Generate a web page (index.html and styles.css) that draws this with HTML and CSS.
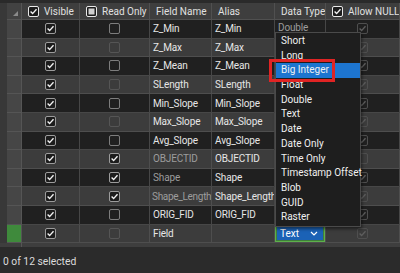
FILE: index.html
```html
<!DOCTYPE html>
<html>
<head>
<meta charset="utf-8">
<link rel="stylesheet" href="styles.css">
</head>
<body>
<svg class="defs" width="0" height="0">
  <symbol id="on" viewBox="0 0 11 11"><rect x="0.5" y="0.5" width="10" height="10" rx="1.5" fill="#1c1c1c" stroke="#9c9c9c"/><path d="M2.6 5.6l2 2 3.9-4.4" stroke="#f2f2f2" stroke-width="1.4" fill="none"/></symbol>
  <symbol id="off" viewBox="0 0 11 11"><rect x="0.5" y="0.5" width="10" height="10" rx="1.5" fill="none" stroke="currentColor"/></symbol>
  <symbol id="dis" viewBox="0 0 11 11"><rect x="0.5" y="0.5" width="10" height="10" rx="1.5" fill="none" stroke="#4f4f4f"/><path d="M2.6 5.6l2 2 3.9-4.4" stroke="#5e5e5e" stroke-width="1.4" fill="none"/></symbol>
  <symbol id="disoff" viewBox="0 0 11 11"><rect x="0.5" y="0.5" width="10" height="10" rx="1.5" fill="none" stroke="#4f4f4f"/></symbol>
  <symbol id="hon" viewBox="0 0 11 11"><rect x="0.5" y="0.5" width="10" height="10" rx="1.5" fill="#1c1c1c" stroke="#e8e8e8"/><path d="M2.6 5.6l2 2 3.9-4.4" stroke="#f2f2f2" stroke-width="1.4" fill="none"/></symbol>
  <symbol id="hind" viewBox="0 0 11 11"><rect x="0.5" y="0.5" width="10" height="10" rx="1.5" fill="#1c1c1c" stroke="#e8e8e8"/><rect x="2.5" y="2.5" width="6" height="6" fill="#cfcfcf"/></symbol>
</svg>
<div class="app">
  <div class="topbar"></div>
  <div class="gridwrap">
    <div class="row hdr">
      <div class="cell rh corner"><span class="tri"></span></div>
      <div class="cell hc"><svg class="cb"><use href="#hon"/></svg><span>Visible</span></div>
      <div class="cell hc"><svg class="cb"><use href="#hind"/></svg><span>Read Only</span></div>
      <div class="cell hc"><span>Field Name</span></div>
      <div class="cell hc"><span>Alias</span></div>
      <div class="cell hc"><span>Data Type</span></div>
      <div class="cell hc"><svg class="cb"><use href="#hon"/></svg><span>Allow NULL</span></div>
    </div>

    <div class="row dk">
      <div class="cell rh"></div>
      <div class="cell c"><svg class="cb"><use href="#on"/></svg></div>
      <div class="cell c"><svg class="cb"><use href="#off"/></svg></div>
      <div class="cell t">Z_Min</div>
      <div class="cell t">Z_Min</div>
      <div class="cell t dim dt">Double</div>
      <div class="cell c"><svg class="cb"><use href="#dis"/></svg></div>
    </div>
    <div class="row lt">
      <div class="cell rh"></div>
      <div class="cell c"><svg class="cb"><use href="#on"/></svg></div>
      <div class="cell c"><svg class="cb"><use href="#off"/></svg></div>
      <div class="cell t">Z_Max</div>
      <div class="cell t">Z_Max</div>
      <div class="cell t"></div>
      <div class="cell c"><svg class="cb"><use href="#dis"/></svg></div>
    </div>
    <div class="row dk">
      <div class="cell rh"></div>
      <div class="cell c"><svg class="cb"><use href="#on"/></svg></div>
      <div class="cell c"><svg class="cb"><use href="#off"/></svg></div>
      <div class="cell t">Z_Mean</div>
      <div class="cell t">Z_Mean</div>
      <div class="cell t"></div>
      <div class="cell c"><svg class="cb"><use href="#dis"/></svg></div>
    </div>
    <div class="row lt">
      <div class="cell rh"></div>
      <div class="cell c"><svg class="cb"><use href="#on"/></svg></div>
      <div class="cell c"><svg class="cb"><use href="#off"/></svg></div>
      <div class="cell t">SLength</div>
      <div class="cell t">SLength</div>
      <div class="cell t"></div>
      <div class="cell c"><svg class="cb"><use href="#dis"/></svg></div>
    </div>
    <div class="row dk">
      <div class="cell rh"></div>
      <div class="cell c"><svg class="cb"><use href="#on"/></svg></div>
      <div class="cell c"><svg class="cb"><use href="#off"/></svg></div>
      <div class="cell t">Min_Slope</div>
      <div class="cell t">Min_Slope</div>
      <div class="cell t"></div>
      <div class="cell c"><svg class="cb"><use href="#dis"/></svg></div>
    </div>
    <div class="row lt">
      <div class="cell rh"></div>
      <div class="cell c"><svg class="cb"><use href="#on"/></svg></div>
      <div class="cell c"><svg class="cb"><use href="#off"/></svg></div>
      <div class="cell t">Max_Slope</div>
      <div class="cell t">Max_Slope</div>
      <div class="cell t"></div>
      <div class="cell c"><svg class="cb"><use href="#dis"/></svg></div>
    </div>
    <div class="row dk">
      <div class="cell rh"></div>
      <div class="cell c"><svg class="cb"><use href="#on"/></svg></div>
      <div class="cell c"><svg class="cb"><use href="#off"/></svg></div>
      <div class="cell t">Avg_Slope</div>
      <div class="cell t">Avg_Slope</div>
      <div class="cell t"></div>
      <div class="cell c"><svg class="cb"><use href="#dis"/></svg></div>
    </div>
    <div class="row lt">
      <div class="cell rh"></div>
      <div class="cell c"><svg class="cb"><use href="#on"/></svg></div>
      <div class="cell c"><svg class="cb"><use href="#on"/></svg></div>
      <div class="cell t dim">OBJECTID</div>
      <div class="cell t">OBJECTID</div>
      <div class="cell t"></div>
      <div class="cell c"><svg class="cb"><use href="#disoff"/></svg></div>
    </div>
    <div class="row dk">
      <div class="cell rh"></div>
      <div class="cell c"><svg class="cb"><use href="#on"/></svg></div>
      <div class="cell c"><svg class="cb"><use href="#on"/></svg></div>
      <div class="cell t dim">Shape</div>
      <div class="cell t">Shape</div>
      <div class="cell t"></div>
      <div class="cell c"><svg class="cb"><use href="#dis"/></svg></div>
    </div>
    <div class="row lt">
      <div class="cell rh"></div>
      <div class="cell c"><svg class="cb"><use href="#on"/></svg></div>
      <div class="cell c"><svg class="cb"><use href="#on"/></svg></div>
      <div class="cell t dim tight">Shape_Length</div>
      <div class="cell t">Shape_Length</div>
      <div class="cell t"></div>
      <div class="cell c"><svg class="cb"><use href="#dis"/></svg></div>
    </div>
    <div class="row dk">
      <div class="cell rh"></div>
      <div class="cell c"><svg class="cb"><use href="#on"/></svg></div>
      <div class="cell c"><svg class="cb"><use href="#off"/></svg></div>
      <div class="cell t">ORIG_FID</div>
      <div class="cell t">ORIG_FID</div>
      <div class="cell t"></div>
      <div class="cell c"><svg class="cb"><use href="#dis"/></svg></div>
    </div>
    <div class="row lt">
      <div class="cell rh new"></div>
      <div class="cell c"><svg class="cb"><use href="#on"/></svg></div>
      <div class="cell c"><svg class="cb"><use href="#off"/></svg></div>
      <div class="cell t">Field</div>
      <div class="cell t"></div>
      <div class="cell ed"><div class="editor"><span>Text</span><svg class="chev" viewBox="0 0 8 5"><path d="M1 1l3 3 3-3" stroke="#fff" stroke-width="1.2" fill="none"/></svg></div></div>
      <div class="cell c"><svg class="cb"><use href="#dis"/></svg></div>
    </div>
  </div>
  <div class="hscroll"><div class="hs-rh"></div></div>
  <div class="status">0 of 12 selected</div>

  <ul class="popup">
    <li>Short</li>
    <li>Long</li>
    <li class="sel">Big Integer</li>
    <li>Float</li>
    <li>Double</li>
    <li>Text</li>
    <li>Date</li>
    <li>Date Only</li>
    <li>Time Only</li>
    <li>Timestamp Offset</li>
    <li>Blob</li>
    <li>GUID</li>
    <li>Raster</li>
  </ul>
  <div class="callout"></div>
</div>
</body>
</html>
```

FILE: styles.css
```css
html, body {
  margin: 0;
  padding: 0;
  background: #2b2b2b;
}
.defs {
  display: block;
  width: 0;
  height: 0;
  overflow: hidden;
}
.app {
  position: relative;
  width: 400px;
  height: 273px;
  overflow: hidden;
  font-family: Roboto, "Noto Sans", sans-serif;
  font-size: 10px;
  color: #e6e6e6;
  background: #2b2b2b;
}
.topbar {
  height: 3px;
  background: #2a2a2a;
}
.gridwrap {
  padding-left: 7px;
  background: #383838;
}
.row {
  display: grid;
  grid-template-columns: 15px 58px 70px 62px 63px 51px 74px;
  height: 18.6px;
}
.row.hdr {
  height: 17px;
}
.cell {
  box-sizing: border-box;
  display: flex;
  align-items: center;
  border-right: 1px solid #4b4b4b;
  border-bottom: 1px solid #4b4b4b;
  overflow: hidden;
  white-space: nowrap;
}
.hdr .cell {
  background: #3e3e3e;
  border-color: #505050;
  color: #e0e0e0;
  padding-left: 6px;
  gap: 5px;
}
.hdr .cell.corner {
  position: relative;
  background: #424242;
  padding: 0;
}
.tri {
  position: absolute;
  right: 3px;
  bottom: 3px;
  width: 0;
  height: 0;
  border-left: 5px solid transparent;
  border-bottom: 5px solid #8a8a8a;
}
.cell.rh {
  background: #464646;
  border-color: #555555;
}
.dk .cell {
  background: #202020;
  border-color: #474747;
}
.lt .cell {
  background: #3c3c3c;
  border-color: #4e4e4e;
}
.dk .cell.rh, .lt .cell.rh {
  background: #464646;
  border-color: #555555;
}
.lt .cell.rh.new {
  background: #3f8a3c;
}
.cell.c {
  justify-content: center;
}
.cell.t {
  padding-left: 3px;
  letter-spacing: -0.15px;
}
.cell.t.tight {
  padding-left: 2px;
  letter-spacing: -0.3px;
}
.cell.dt {
  align-items: flex-start;
  padding-top: 2px;
}
.cell.dim {
  color: #9c9c9c;
}
.cb {
  width: 11px;
  height: 11px;
  flex: none;
}
.dk .cb {
  color: #7d7d7d;
}
.lt .cb {
  color: #555555;
}
.cell.ed {
  padding: 0;
  align-items: stretch;
}
.editor {
  flex: 1;
  display: flex;
  align-items: center;
  justify-content: space-between;
  background: #1b62b6;
  border: 1px solid #5db04c;
  box-shadow: inset 0 0 0 1px #3f7f3a;
  padding: 0 6px 0 4px;
  color: #ffffff;
}
.chev {
  width: 8px;
  height: 5px;
}
.hscroll {
  height: 4px;
  padding-left: 7px;
  background: #3e3e3e;
}
.hs-rh {
  width: 15px;
  height: 4px;
  box-sizing: border-box;
  border-right: 1px solid #555555;
}
.status {
  padding: 8px 3px 0;
  font-size: 10.3px;
  color: #dcdcdc;
}
.popup {
  position: absolute;
  left: 275px;
  top: 32px;
  width: 84px;
  margin: 0;
  padding: 1px 0;
  list-style: none;
  background: #1e1e1e;
  border: 1px solid #4a4a4a;
  box-shadow: 1px 2px 3px rgba(0, 0, 0, 0.5);
}
.popup li {
  height: 14.7px;
  line-height: 14.7px;
  padding-left: 5px;
  color: #f0f0f0;
  white-space: nowrap;
}
.popup li.sel {
  background: #1d75d0;
}
.callout {
  position: absolute;
  left: 269px;
  top: 59px;
  width: 66px;
  height: 23px;
  box-sizing: border-box;
  border: 3px solid #e02424;
}
```
